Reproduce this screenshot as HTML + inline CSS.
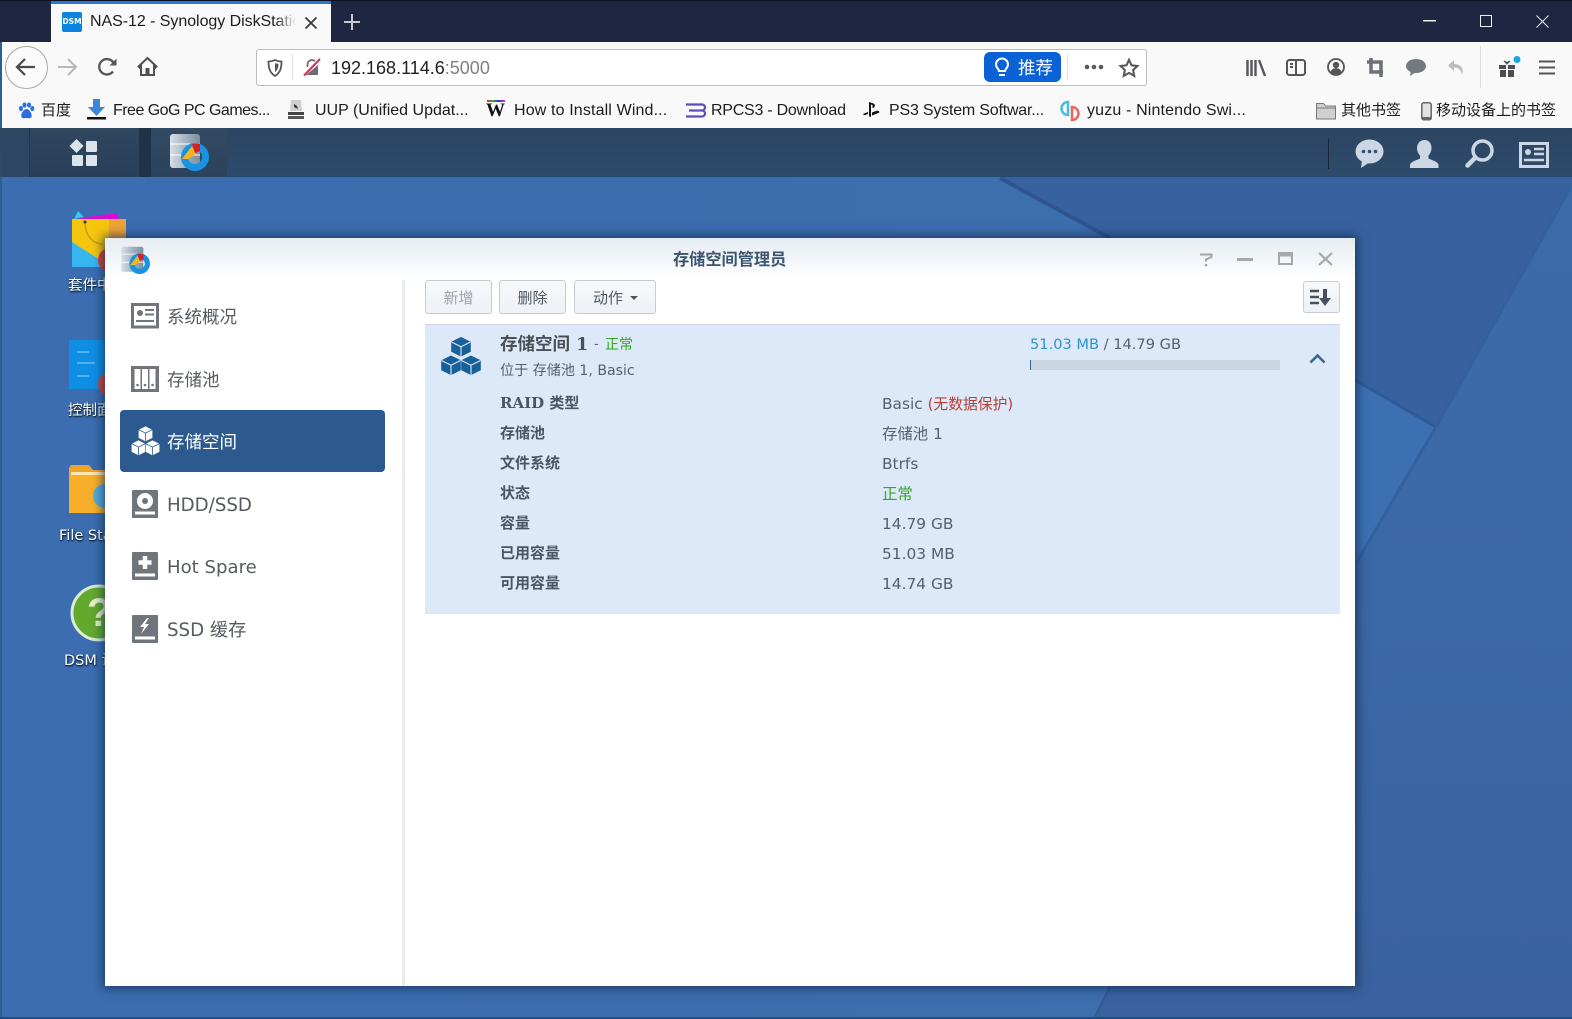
<!DOCTYPE html>
<html lang="zh"><head><meta charset="utf-8"><title>NAS-12 - Synology DiskStation</title>
<style>
*{box-sizing:border-box}
html,body{margin:0;padding:0;width:1572px;height:1019px;overflow:hidden;background:#3a65a3}
body{position:relative;font-family:"DejaVu Sans","Noto Sans CJK SC",sans-serif}
.a{position:absolute}
.t{position:absolute;white-space:nowrap;line-height:20px;height:20px}
.b{font-family:"Liberation Sans","Noto Sans CJK SC",sans-serif;font-size:16px;color:#1c1c1c}
.d{font-size:14.5px;color:#fff;text-shadow:1px 1px 2px #0d2238,0 1px 1px #0d2238}
.n{font-size:18.2px;color:#565b61;font-family:"DejaVu Sans","Noto Sans CJK SC",sans-serif}
.l{font-size:15px;color:#4a5563;font-weight:700;font-family:"DejaVu Serif","Noto Sans CJK SC",sans-serif}
.v{font-size:15.4px;color:#55606e}
.btn{position:absolute;top:280px;height:34px;border:1px solid #c6ccd4;border-radius:3px;background:linear-gradient(#f7f9fb,#eef1f5);text-align:center;font-size:15px;line-height:35px;color:#4c5660}
svg{position:absolute;overflow:visible}
</style></head><body>
<!-- wallpaper -->
<svg class="a" style="left:0;top:0" width="1572" height="1019" viewBox="0 0 1572 1019">
<defs><linearGradient id="g1" x1="0" y1="0" x2="1" y2="0"><stop offset="0" stop-color="#3b6db0"/><stop offset="1" stop-color="#3e6ead"/></linearGradient>
<linearGradient id="g2" x1="0" y1="0" x2="0" y2="1"><stop offset="0" stop-color="#3d6baa"/><stop offset=".5" stop-color="#3b68a7"/><stop offset="1" stop-color="#39629e"/></linearGradient></defs>
<rect width="1572" height="1019" fill="url(#g1)"/>
<polygon points="1000,177 1572,177 1572,185 1436,427 1355,380 1355,238 1110,238" fill="#38629f"/>
<polygon points="1572,185 1572,1019 1094,1019 1110,986 1355,986 1355,565 1436,427" fill="url(#g2)"/>
<polygon points="1355,380 1436,427 1355,565" fill="#3c70b2"/>
<path d="M1000,178L1110,238" stroke="#2f5590" stroke-width="4" fill="none"/>
<path d="M1355,380L1436,427" stroke="#2f5a98" stroke-width="3" fill="none"/>
<path d="M1572,185L1436,427L1355,565" stroke="#33609f" stroke-width="3" fill="none"/>
<path d="M1110,986L1094,1019" stroke="#2f5a96" stroke-width="2" fill="none"/>
</svg>
<div class="a" style="left:0;top:0;width:2px;height:1019px;background:#28608e"></div>
<div class="a" style="left:0;top:1017px;width:1572px;height:2px;background:#1f4f80"></div>

<!-- browser chrome -->
<div class="a" style="left:0;top:0;width:1572px;height:42px;background:#1f2642;border-top:1px solid #0c1020"></div>
<div class="a" style="left:51px;top:1px;width:280px;height:41px;background:#f9f9fa;border-top:3px solid #2a78d6"></div>
<div class="a" style="left:62px;top:12px;width:20px;height:20px;background:#0a84df;border-radius:2px;color:#fff;font:700 7.5px/20px 'DejaVu Sans',sans-serif;text-align:center">DSM</div>
<div class="t b" style="left:90px;top:12px;width:206px;overflow:hidden;font-size:16px;letter-spacing:-.05px;-webkit-mask-image:linear-gradient(90deg,#000 90%,transparent)">NAS-12 - Synology DiskStation</div>
<svg style="left:305px;top:17px" width="12" height="12" viewBox="0 0 12 12"><path d="M.5.5l11 11M11.5.5l-11 11" stroke="#3a3a3a" stroke-width="1.8"/></svg>
<svg style="left:343px;top:13px" width="18" height="18" viewBox="0 0 18 18"><path d="M9 1v16M1 9h16" stroke="#c8cbd4" stroke-width="2"/></svg>
<svg style="left:1423px;top:20px" width="13" height="2"><rect width="13" height="1.5" fill="#eee"/></svg>
<svg style="left:1480px;top:15px" width="12" height="12"><rect x=".5" y=".5" width="11" height="11" fill="none" stroke="#eee"/></svg>
<svg style="left:1536px;top:15px" width="13" height="13"><path d="M.5.5l12 12M12.5.5l-12 12" stroke="#eee"/></svg>

<div class="a" style="left:0;top:42px;width:1572px;height:86px;background:#f9f9fa;border-left:2px solid #28608e"></div>
<div class="a" style="left:5px;top:46px;width:43px;height:43px;border-radius:50%;border:1px solid #a8a8a8;background:#fbfbfb"></div>
<svg style="left:15px;top:57px" width="22" height="20" viewBox="0 0 22 20"><path d="M10 2L2 10l8 8M2 10h18" fill="none" stroke="#4a4a4f" stroke-width="2.2"/></svg>
<svg style="left:57px;top:58px" width="21" height="18" viewBox="0 0 21 18"><path d="M11 1l8 8-8 8M19 9H1" fill="none" stroke="#b8b8bb" stroke-width="2"/></svg>
<svg style="left:97px;top:57px" width="21" height="20" viewBox="0 0 21 20"><path d="M16 14.5A7.7 7.7 0 1 1 16 5l2.5 2.5" fill="none" stroke="#55555a" stroke-width="2.3"/><path d="M19.5 1.5v7h-7z" fill="#55555a"/></svg>
<svg style="left:137px;top:56px" width="21" height="21" viewBox="0 0 21 21"><path d="M10.5 2L1.5 10.5l1.3 1.3L4 10.8V19h13v-8.2l1.2 1 1.3-1.300L10.500 2z" fill="none" stroke="#4f4f54" stroke-width="2"/><rect x="8.500" y="12" width="4" height="7" fill="#4f4f54"/></svg>

<div class="a" style="left:256px;top:49px;width:891px;height:37px;background:#fff;border:1px solid #bdbdc0;border-radius:3px"></div>
<svg style="left:267px;top:59px" width="16" height="18" viewBox="0 0 16 18"><path d="M8 1c2 1 4 1.500 6.500 1.500 0 6 -1 11-6.500 14.500C2.500 13.500 1.500 8.500 1.500 2.500 4 2.500 6 2 8 1z" fill="none" stroke="#55555a" stroke-width="1.800"/><path d="M8 4c1 .5 2 .8 3.500.9 0 3-.6 6-3.500 8.200z" fill="#55555a"/></svg>
<div class="a" style="left:292px;top:54px;width:1px;height:26px;background:#e2e2e4"></div>
<svg style="left:303px;top:58px" width="18" height="18" viewBox="0 0 18 18"><path d="M4.500 9V6.500a4.500 4.500 0 0 1 7.500-3.300" fill="none" stroke="#6d6d70" stroke-width="1.800"/><path d="M3 17L15 7v10z" fill="#6d6d70"/><path d="M1 17.500L17 1" stroke="#e0274f" stroke-width="2"/></svg>
<div class="t b" style="left:331px;top:58px;font-size:18px;color:#202020">192.168.114.6<span style="color:#808085">:5000</span></div>
<div class="a" style="left:984px;top:52px;width:77px;height:30px;background:#0a62d6;border-radius:6px"></div>
<svg style="left:994px;top:58px" width="16" height="20" viewBox="0 0 16 20"><path d="M5 13c0-2-3-3-3-6.500a6 6 0 0 1 12 0C14 10 11 11 11 13z" fill="none" stroke="#fff" stroke-width="2"/><path d="M5 17h6" stroke="#fff" stroke-width="2"/></svg>
<div class="t" style="left:1018px;top:58px;font:17.500px/20px 'Noto Sans CJK SC',sans-serif;color:#fff">推荐</div>
<div class="a" style="left:1067px;top:54px;width:1px;height:26px;background:#e2e2e4"></div>
<svg style="left:1084px;top:64px" width="20" height="6"><circle cx="3" cy="3" r="2.300" fill="#5a5a5e"/><circle cx="10" cy="3" r="2.300" fill="#5a5a5e"/><circle cx="17" cy="3" r="2.300" fill="#5a5a5e"/></svg>
<svg style="left:1119px;top:58px" width="20" height="20" viewBox="0 0 20 20"><path d="M10 1.800l2.500 5.500 6 .7-4.400 4 1.200 5.900-5.300-3-5.300 3 1.200-5.900-4.400-4 6-.7z" fill="none" stroke="#55555a" stroke-width="2"/></svg>

<svg style="left:1246px;top:59px" width="20" height="17" viewBox="0 0 20 17"><path d="M1.500 1v16M5.500 1v16M9.500 1v16M13 1l6 16" stroke="#55555a" stroke-width="2.400" fill="none"/></svg>
<svg style="left:1286px;top:59px" width="20" height="17" viewBox="0 0 20 17"><rect x="1" y="1" width="18" height="15" rx="2.500" fill="none" stroke="#55555a" stroke-width="2"/><path d="M10 1v15M4 5h3M4 8h3" stroke="#55555a" stroke-width="2"/></svg>
<svg style="left:1327px;top:58px" width="18" height="18" viewBox="0 0 18 18"><circle cx="9" cy="9" r="8" fill="none" stroke="#55555a" stroke-width="1.800"/><circle cx="9" cy="7" r="3.200" fill="#55555a"/><path d="M3.500 14c1-3 3-3.800 5.500-3.800s4.500.8 5.500 3.800c-3 2.800-8 2.800-11 0z" fill="#55555a"/></svg>
<svg style="left:1367px;top:58px" width="18" height="19" viewBox="0 0 18 19"><path d="M4 0v14h12M0 4h14v15" fill="none" stroke="#6e7278" stroke-width="3.500"/></svg>
<svg style="left:1406px;top:59px" width="20" height="17" viewBox="0 0 20 17"><ellipse cx="10" cy="7" rx="10" ry="7" fill="#747a80"/><path d="M5 11l-1 6 6-4z" fill="#747a80"/></svg>
<svg style="left:1447px;top:59px" width="18" height="18" viewBox="0 0 18 18"><path d="M7 1L1 6.500 7 12V8.500c5 0 7 2 8 8 2-7-1-11.500-8-11.500z" fill="#b9bcc0"/></svg>
<div class="a" style="left:1480px;top:46px;width:1px;height:42px;background:#dcdcde"></div>
<svg style="left:1498px;top:56px" width="24" height="22" viewBox="0 0 24 22"><path d="M1 9h7v4H1zM10 9h7v4h-7zM2 14h6v7H2zM10 14h6v7h-6z" fill="#4e4e52"/><path d="M6 5l3 3 3-3-3 1.500z" fill="#4e4e52" stroke="#4e4e52"/><circle cx="19" cy="3.500" r="3.500" fill="#18a6e8"/></svg>
<svg style="left:1539px;top:60px" width="16" height="15"><path d="M0 1.500h16M0 7.500h16M0 13.500h16" stroke="#55555a" stroke-width="2"/></svg>

<!-- bookmarks -->
<svg style="left:18px;top:102px" width="17" height="17" viewBox="0 0 17 17"><ellipse cx="3" cy="6.500" rx="2" ry="2.600" fill="#2a6fe0"/><ellipse cx="6.500" cy="3" rx="2" ry="2.600" fill="#2a6fe0"/><ellipse cx="11" cy="3" rx="2" ry="2.600" fill="#2a6fe0"/><ellipse cx="14.300" cy="6.500" rx="2" ry="2.600" fill="#2a6fe0"/><path d="M8.500 7c3 0 6 5 5 8-1 2-3 1-5 1s-4 1-5-1c-1-3 2-8 5-8z" fill="#2a6fe0"/></svg>
<div class="t b" style="left:41px;top:101px;font-size:15px">百度</div>
<svg style="left:87px;top:99px" width="19" height="21" viewBox="0 0 19 21"><path d="M6 0h7v8h5l-8.500 9L1 8h5z" fill="#3a86d8"/><rect y="18" width="19" height="2.500" fill="#111"/></svg>
<div class="t b" style="left:113px;top:101px;letter-spacing:-.52px">Free GoG PC Games...</div>
<svg style="left:288px;top:100px" width="16" height="20" viewBox="0 0 16 20"><path d="M3 0h10l1 11H2z" fill="#cfcfcf"/><path d="M6 4l3 2 1 3-4-2z" fill="#333"/><rect y="12" width="16" height="3" fill="#444"/><rect y="16" width="16" height="3" fill="#555"/></svg>
<div class="t b" style="left:315px;top:101px">UUP (Unified Updat...</div>
<div class="t" style="left:486px;top:101px;font:900 19px/20px 'Liberation Serif',serif;color:#111">W</div>
<div class="a" style="left:487px;top:100px;width:18px;height:2px;background:linear-gradient(90deg,#d33,#3a3,#33d,#d3d)"></div>
<div class="t b" style="left:514px;top:101px;letter-spacing:.14px">How to Install Wind...</div>
<svg style="left:686px;top:103px" width="20" height="15" viewBox="0 0 20 15"><path d="M0 1.500h16a3 3 0 0 1 0 6H3h13a3 3 0 0 1 0 6H0" fill="none" stroke="#5f4bc0" stroke-width="2.300"/></svg>
<div class="t b" style="left:711px;top:101px;letter-spacing:-.25px">RPCS3 - Download</div>
<svg style="left:863px;top:102px" width="17" height="15" viewBox="0 0 17 15"><path d="M6 0l4.500 1.500c2 .8 2 4.500-1 4.500V3L8 2.500V15l-2-.7z" fill="#111"/><path d="M5 10L1 11.500c-1.500.8-.5 1.700 1 1.500l3-1zM9 10.500l4-1.500c3-.8 4 1 3 1.800l-7 2.700z" fill="#111"/></svg>
<div class="t b" style="left:889px;top:101px;letter-spacing:-.2px">PS3 System Softwar...</div>
<svg style="left:1060px;top:101px" width="22" height="20" viewBox="0 0 22 20"><path d="M8 1a6.500 6.500 0 0 0 0 13z" fill="none" stroke="#48bde0" stroke-width="2.500"/><path d="M12 6a6.500 6.500 0 0 1 0 13z" fill="none" stroke="#e8695c" stroke-width="2.500"/></svg>
<div class="t b" style="left:1087px;top:101px;letter-spacing:.15px">yuzu - Nintendo Swi...</div>
<svg style="left:1316px;top:102px" width="20" height="18" viewBox="0 0 20 18"><path d="M.5 17V1.500h7l2 2.500h10v13z" fill="#cfcfcf" stroke="#77777a"/><path d="M.5 6h19" stroke="#77777a"/></svg>
<div class="t b" style="left:1341px;top:101px;font-size:15px">其他书签</div>
<svg style="left:1421px;top:102px" width="11" height="19" viewBox="0 0 11 19"><rect x=".8" y=".8" width="9.400" height="17" rx="2" fill="#e2e2e2" stroke="#66666a" stroke-width="1.500"/><rect x="1" y="15" width="9" height="3" fill="#66666a"/></svg>
<div class="t b" style="left:1436px;top:101px;font-size:15px">移动设备上的书签</div>

<!-- DSM taskbar -->
<div class="a" style="left:0;top:128px;width:1572px;height:49px;background:linear-gradient(#2b4562,#2e4b6b);border-bottom:1px solid #24486f"></div>
<div class="a" style="left:2px;top:128px;width:25px;height:49px;background:#2d4661"></div>
<div class="a" style="left:29px;top:128px;width:110px;height:49px;background:linear-gradient(#30465e,#2a4058);border-left:1px solid #23364b"></div>
<div class="a" style="left:139px;top:128px;width:12px;height:49px;background:#1f3247"></div>
<div class="a" style="left:151px;top:128px;width:76px;height:49px;background:linear-gradient(#324a64,#2a425c)"></div>
<svg style="left:69px;top:139px" width="30" height="29" viewBox="0 0 30 29"><path d="M7.500 0l7 7-7 7-7-7z" fill="#dbe3ec"/><rect x="17" y="2" width="11" height="11" rx="1" fill="#dbe3ec"/><rect x="3" y="16" width="11" height="11" rx="1" fill="#dbe3ec"/><rect x="17" y="16" width="11" height="11" rx="1" fill="#dbe3ec"/></svg>
<svg style="left:170px;top:133px" width="40" height="38" viewBox="0 0 40 38"><defs><linearGradient id="cy" x1="0" x2="1" y1="0" y2="0"><stop offset="0" stop-color="#d8dfe6"/><stop offset=".5" stop-color="#a5b4c2"/><stop offset="1" stop-color="#7f8e9c"/></linearGradient></defs><rect x="0" y="1" width="30" height="34" rx="3" fill="url(#cy)"/><path d="M0 11h30M0 22h30" stroke="#fff" stroke-width="1"/><circle cx="25" cy="24" r="10.500" fill="none" stroke="#1a92e2" stroke-width="7"/><path d="M12 26l10-13 4 8-8 5z" fill="#f3b61f"/><path d="M22 11h8v7l-5 2z" fill="#d81f27"/></svg>
<div class="a" style="left:1328px;top:139px;width:1px;height:30px;background:#162738"></div>
<svg style="left:1355px;top:139px" width="29" height="29" viewBox="0 0 29 29"><ellipse cx="14.500" cy="12.500" rx="14" ry="12" fill="#ccd7e3"/><path d="M7 21l-1 8 9-6z" fill="#ccd7e3"/><circle cx="8.500" cy="12.500" r="1.800" fill="#33506e"/><circle cx="14.500" cy="12.500" r="1.800" fill="#33506e"/><circle cx="20.500" cy="12.500" r="1.800" fill="#33506e"/></svg>
<svg style="left:1410px;top:139px" width="29" height="29" viewBox="0 0 29 29"><path d="M14.500 1c5 0 7 4 7 8 0 3-1.500 6-3 7.500v3c2 1.500 8 2 10 6v3.500H0V25.500c2-4 8-4.500 10-6v-3c-1.500-1.500-3-4.500-3-7.500 0-4 2.500-8 7.500-8z" fill="#ccd7e3"/></svg>
<svg style="left:1465px;top:139px" width="29" height="29" viewBox="0 0 29 29"><circle cx="17.500" cy="11.500" r="9.500" fill="none" stroke="#ccd7e3" stroke-width="3.500"/><path d="M10.500 18.500L2.500 26.500" stroke="#ccd7e3" stroke-width="4.500" stroke-linecap="round"/></svg>
<svg style="left:1519px;top:142px" width="30" height="26" viewBox="0 0 30 26"><rect x="1.500" y="1.500" width="27" height="23" fill="none" stroke="#ccd7e3" stroke-width="3"/><circle cx="9" cy="10" r="3" fill="#ccd7e3"/><path d="M15 7h10M15 12h10M5 18h20" stroke="#ccd7e3" stroke-width="2.400"/></svg>

<!-- desktop icons -->
<svg style="left:71px;top:210px" width="56" height="58" viewBox="0 0 56 58"><path d="M1 9h54v48H1z" fill="#f5c60e"/><path d="M38 9h17v28H38z" fill="#efa23a"/><path d="M8 8L46 3l2 6H8z" fill="#d40ed4"/><path d="M3 9l4-8 6 6z" fill="#38c8ee"/><path d="M1 32L40 57H1z" fill="#38b6f0"/><path d="M14 12c0 14 8 22 18 22" fill="none" stroke="#c99e10" stroke-width="1.500"/><circle cx="14" cy="12" r="1.500" fill="#333"/></svg>
<div class="a" style="left:98px;top:248px;width:24px;height:24px;border-radius:50%;background:#d2453e"></div>
<div class="t d" style="left:68px;top:276px;width:37px;overflow:hidden">套件中心</div>
<svg style="left:69px;top:340px" width="36" height="50"><rect width="36" height="49" fill="#0f8fe4"/><path d="M8 12h12M8 23h18M8 36h12" stroke="#63bdf3" stroke-width="1.500"/></svg>
<div class="a" style="left:98px;top:372px;width:24px;height:24px;border-radius:50%;background:#d2453e"></div>
<div class="t d" style="left:68px;top:401px;width:37px;overflow:hidden">控制面板</div>
<svg style="left:69px;top:465px" width="36" height="48"><path d="M2 0h18l4 5h12v43H0V3z" fill="#f0a32a"/><rect x="2" y="7" width="34" height="3" fill="#fde6b0"/><rect x="0" y="10" width="36" height="38" fill="#f7ae2a"/><circle cx="36" cy="31" r="12" fill="#58a9d8"/></svg>
<div class="t d" style="left:59px;top:526px;width:46px;overflow:hidden">File Station</div>
<svg style="left:71px;top:585px" width="34" height="56"><circle cx="28" cy="28" r="27" fill="#62a92d" stroke="#dcebd2" stroke-width="3"/></svg>
<div class="t" style="left:87px;top:598px;font:700 40px/30px 'Liberation Sans',sans-serif;color:#e8f2c8;width:18px;height:34px;overflow:hidden">?</div>
<div class="t d" style="left:64px;top:651px;width:41px;overflow:hidden">DSM 说明</div>

<!-- window -->
<div class="a" style="left:105px;top:238px;width:1250px;height:748px;background:#fff;box-shadow:0 0 10px 2px rgba(15,40,75,.75)"></div>
<div class="a" style="left:105px;top:238px;width:1250px;height:42px;background:linear-gradient(#e6ecf2,#fff)"></div>
<svg style="left:121px;top:246px" width="30" height="28" viewBox="0 0 40 38"><rect x="0" y="1" width="30" height="34" rx="3" fill="url(#cy)"/><path d="M0 11h30M0 22h30" stroke="#fff"/><circle cx="25" cy="24" r="10.500" fill="none" stroke="#1a92e2" stroke-width="7"/><path d="M12 26l10-13 4 8-8 5z" fill="#f3b61f"/><path d="M22 11h8v7l-5 2z" fill="#d81f27"/></svg>
<div class="t" style="left:673px;top:248px;font:700 16.200px/20px 'Noto Sans CJK SC',sans-serif;color:#3c556f">存储空间管理员</div>
<svg style="left:1198px;top:252px" width="16" height="15" viewBox="0 0 16 15"><path d="M2 2.500h11.500v2.500L8 7.500v2" fill="none" stroke="#a3a3a3" stroke-width="2"/><circle cx="8" cy="13" r="1.300" fill="#a3a3a3"/></svg>
<div class="a" style="left:1237px;top:258px;width:16px;height:3px;background:#a8a8a8"></div>
<svg style="left:1278px;top:252px" width="15" height="13"><rect x="1" y="1" width="13" height="11" fill="none" stroke="#a8a8a8" stroke-width="2"/><rect x="1" y="1" width="13" height="3.500" fill="#a8a8a8"/></svg>
<svg style="left:1318px;top:252px" width="15" height="14"><path d="M1 1l13 12M14 1L1 13" stroke="#a8a8a8" stroke-width="2.200"/></svg>
<div class="a" style="left:402px;top:280px;width:3px;height:706px;background:#eaecee"></div>

<!-- sidebar -->
<div class="a" style="left:120px;top:410px;width:265px;height:62px;background:#2d5a8e;border-radius:4px"></div>
<svg style="left:131px;top:303px" width="28" height="26" viewBox="0 0 28 26"><rect x="1.500" y="1.500" width="25" height="22.500" fill="none" stroke="#70757b" stroke-width="3"/><circle cx="9" cy="10" r="3" fill="#70757b"/><path d="M14 7h9M14 11.500h9M5 18h18" stroke="#70757b" stroke-width="2"/></svg>
<div class="t n" style="left:167px;top:308px;font-size:17.500px">系统概况</div>
<svg style="left:131px;top:366px" width="28" height="26" viewBox="0 0 28 26"><rect width="28" height="26" fill="#70757b"/><rect x="3.500" y="3" width="6" height="20" fill="#fff"/><rect x="11" y="3" width="6" height="20" fill="#fff"/><rect x="18.500" y="3" width="6" height="20" fill="#fff"/><circle cx="6.500" cy="19" r="1.300" fill="#70757b"/><circle cx="14" cy="19" r="1.300" fill="#70757b"/><circle cx="21.500" cy="19" r="1.300" fill="#70757b"/></svg>
<div class="t n" style="left:167px;top:371px;font-size:17.500px">存储池</div>
<svg style="left:131px;top:426px" width="29" height="30" viewBox="0 0 29 30"><g fill="#fff" stroke="#2d5a8e" stroke-width=".6"><path d="M14.500 0l7.200 3.600v8.400l-7.200 3.600-7.200-3.600V3.600z"/><path d="M7.500 14l7.200 3.600V26l-7.200 3.600L.3 26v-8.400z"/><path d="M21.500 14l7.200 3.600V26l-7.200 3.600-7.200-3.600v-8.400z"/></g><path d="M7.500 3.600l7 3.500 7-3.500M14.500 7.100v8M.5 17.600l7 3.500 7-3.500M7.500 21.100v8M14.500 17.600l7 3.500 7-3.500M21.500 21.100v8" stroke="#2d5a8e" stroke-width=".8" fill="none"/></svg>
<div class="t n" style="left:167px;top:433px;color:#fff;font-size:17.500px">存储空间</div>
<svg style="left:132px;top:490px" width="26" height="28" viewBox="0 0 26 28"><rect width="26" height="28" rx="1" fill="#70757b"/><circle cx="13" cy="11" r="8" fill="#fff"/><circle cx="13" cy="11" r="3" fill="#70757b"/><rect x="3" y="21.500" width="20" height="3" fill="#fff"/></svg>
<div class="t n" style="left:167px;top:496px">HDD/SSD</div>
<svg style="left:132px;top:552px" width="26" height="28" viewBox="0 0 26 28"><rect width="26" height="28" rx="1" fill="#70757b"/><path d="M13 4v13M6.500 10.500h13" stroke="#fff" stroke-width="4.500"/><rect x="3" y="21.500" width="20" height="3" fill="#fff"/></svg>
<div class="t n" style="left:167px;top:558px;font-size:18.100px">Hot Spare</div>
<svg style="left:132px;top:615px" width="26" height="28" viewBox="0 0 26 28"><rect width="26" height="28" rx="1" fill="#70757b"/><path d="M15 3l-7 9h4l-3 7 8-10h-4l4-6z" fill="#fff"/><rect x="3" y="21.500" width="20" height="3" fill="#fff"/></svg>
<div class="t n" style="left:167px;top:621px">SSD 缓存</div>

<!-- toolbar -->
<div class="btn" style="left:425px;width:67px;color:#9da4ad">新增</div>
<div class="btn" style="left:499px;width:67px">删除</div>
<div class="btn" style="left:574px;width:82px;text-align:left;padding-left:18px">动作<span class="a" style="left:55px;top:15px;border:4px solid transparent;border-top:4px solid #4c5660"></span></div>
<div class="btn" style="left:1303px;top:281px;width:37px;height:32px"></div>
<svg style="left:1310px;top:289px" width="22" height="17" viewBox="0 0 22 17"><path d="M0 2h9M0 8h9M0 14h9" stroke="#47505c" stroke-width="2.400"/><path d="M13 0h4v9h4l-6 8-6-8h4z" fill="#47505c"/></svg>

<!-- volume panel -->
<div class="a" style="left:425px;top:324px;width:915px;height:290px;background:#dde9f9;border-top:1px solid #c8d6e6"></div>
<svg style="left:441px;top:337px" width="40" height="39" viewBox="0 0 40 39"><g fill="#176099"><path d="M20 0l9.800 4.800v10L20 19.600l-9.800-4.800v-10z"/><path d="M10 18.500l9.800 4.800v10L10 38.100.2 33.300v-10z"/><path d="M30 18.500l9.800 4.800v10L30 38.100l-9.800-4.800v-10z"/></g><path d="M10.500 5l9.500 4.700L29.500 5M20 9.700v9.800M.5 23.500l9.500 4.700 9.500-4.700M10 28.200v9.800M20.500 23.500l9.500 4.700 9.500-4.700M30 28.200v9.800" stroke="#dce9f9" stroke-width="1.100" fill="none"/></svg>
<div class="t" style="left:500px;top:335px;font:700 17.500px/20px 'DejaVu Serif','Noto Sans CJK SC',sans-serif;color:#4a4f55">存储空间 1</div>
<div class="t v" style="left:594px;top:335px;font-size:13px">-</div>
<div class="t" style="left:605px;top:334px;font:14px/20px 'Noto Sans CJK SC',sans-serif;color:#33a51e">正常</div>
<div class="t v" style="left:500px;top:361px;font-size:14.100px">位于 存储池 1, Basic</div>
<div class="t v" style="left:1030px;top:335px;font-size:14.600px"><span style="color:#2b93d2">51.03 MB</span> / 14.79 GB</div>
<div class="a" style="left:1030px;top:360px;width:250px;height:10px;background:#ccd6e3"></div>
<div class="a" style="left:1030px;top:360px;width:1px;height:10px;background:#2b6a9e"></div>
<svg style="left:1309px;top:353px" width="17" height="11" viewBox="0 0 17 11"><path d="M1.500 9.500l7-7 7 7" fill="none" stroke="#3b6590" stroke-width="2.600"/></svg>

<div class="t l" style="left:500px;top:393px">RAID <span style="font-family:'Noto Sans CJK SC',sans-serif">类型</span></div>
<div class="t l" style="left:500px;top:423px;font-family:'Noto Sans CJK SC',sans-serif">存储池</div>
<div class="t l" style="left:500px;top:453px;font-family:'Noto Sans CJK SC',sans-serif">文件系统</div>
<div class="t l" style="left:500px;top:483px;font-family:'Noto Sans CJK SC',sans-serif">状态</div>
<div class="t l" style="left:500px;top:513px;font-family:'Noto Sans CJK SC',sans-serif">容量</div>
<div class="t l" style="left:500px;top:543px;font-family:'Noto Sans CJK SC',sans-serif">已用容量</div>
<div class="t l" style="left:500px;top:573px;font-family:'Noto Sans CJK SC',sans-serif">可用容量</div>

<div class="t v" style="left:882px;top:394px">Basic <span style="color:#b83f35;font-size:14.800px">(无数据保护)</span></div>
<div class="t v" style="left:882px;top:424px">存储池 1</div>
<div class="t v" style="left:882px;top:454px">Btrfs</div>
<div class="t v" style="left:882px;top:484px;color:#33a51e">正常</div>
<div class="t v" style="left:882px;top:514px">14.79 GB</div>
<div class="t v" style="left:882px;top:544px">51.03 MB</div>
<div class="t v" style="left:882px;top:574px">14.74 GB</div>
</body></html>
